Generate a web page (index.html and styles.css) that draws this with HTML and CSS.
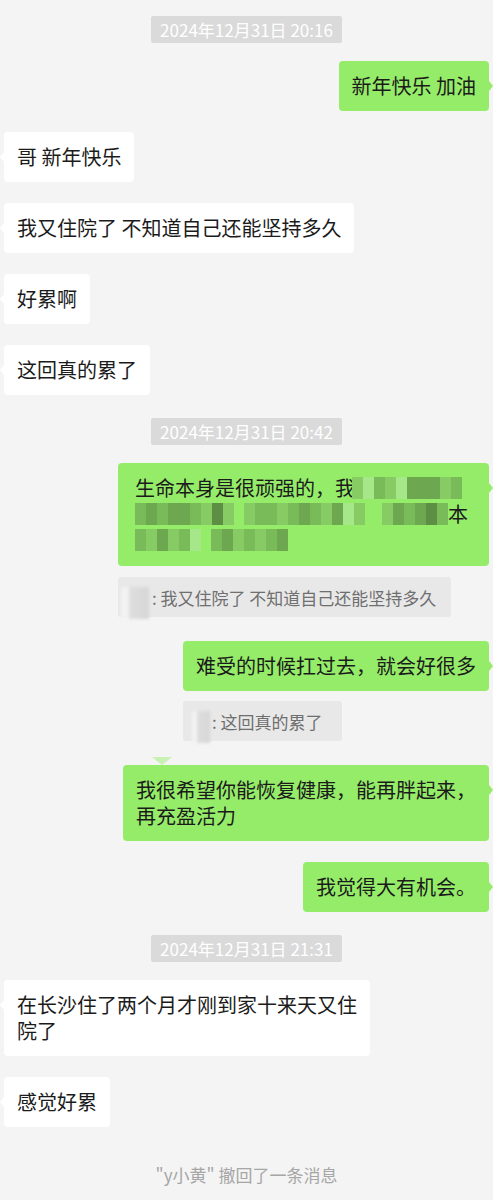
FILE: index.html
```html
<!DOCTYPE html>
<html lang="zh-CN">
<head>
    <meta charset="UTF-8">
    <meta name="viewport" content="width=device-width, initial-scale=1.0">
    <title>聊天记录</title>
    <link rel="stylesheet" href="styles.css">
</head>
<body>

    <div class="chat">

        <div class="time first">2024年12月31日 20:16</div>

        <div class="row me"><div class="bubble green">新年快乐 加油</div></div>
        <div class="row"><div class="bubble white">哥 新年快乐</div></div>
        <div class="row"><div class="bubble white">我又住院了 不知道自己还能坚持多久</div></div>
        <div class="row"><div class="bubble white">好累啊</div></div>
        <div class="row"><div class="bubble white">这回真的累了</div></div>

        <div class="time">2024年12月31日 20:42</div>

        <!-- reply with quoted message -->
        <div class="row me">
            <div class="group">
                <div class="bubble green wide">
                    <div class="line">生命本身是很顽强的，我<span class="mosaic m-a"><i class="c2"></i><i class="c1"></i><i class="c3"></i><i class="c2"></i><i class="c1"></i><i class="c4"></i><i class="c4"></i><i class="c4"></i><i class="c2"></i><i class="c3"></i></span></div>
                    <div class="line"><span class="mosaic m-b"><i class="c3"></i><i class="c4"></i><i class="c3"></i><i class="c4"></i><i class="c4"></i><i class="c3"></i><i class="c2"></i><i class="c5"></i><i class="c2"></i></span><span class="mosaic m-c"><i class="c2"></i><i class="c3"></i><i class="c3"></i><i class="c2"></i><i class="c3"></i><i class="c4"></i><i class="c3"></i><i class="c2"></i><i class="c4"></i><i class="c1"></i><i class="c2"></i></span><span class="mosaic m-d"><i class="c2"></i><i class="c4"></i><i class="c3"></i><i class="c4"></i><i class="c5"></i><i class="c3"></i></span>本</div>
                    <div class="line"><span class="mosaic m-e"><i class="c3"></i><i class="c2"></i><i class="c4"></i><i class="c2"></i><i class="c3"></i><i class="c1"></i></span><span class="mosaic m-f"><i class="c3"></i><i class="c4"></i><i class="c2"></i><i class="c3"></i><i class="c2"></i><i class="c3"></i><i class="c4"></i></span></div>
                </div>
                <div class="quote"><span class="blob"></span>: 我又住院了 不知道自己还能坚持多久</div>
            </div>
        </div>

        <div class="row me after-quote">
            <div class="group">
                <div class="bubble green">难受的时候扛过去，就会好很多</div>
                <div class="quote short"><span class="blob"></span>: 这回真的累了</div>
            </div>
        </div>

        <div class="row me after-quote"><div class="bubble green notch">我很希望你能恢复健康，能再胖起来，再充盈活力</div></div>
        <div class="row me"><div class="bubble green">我觉得大有机会。</div></div>

        <div class="time">2024年12月31日 21:31</div>

        <div class="row"><div class="bubble white">在长沙住了两个月才刚到家十来天又住院了</div></div>
        <div class="row"><div class="bubble white">感觉好累</div></div>

        <div class="notice">"y小黄" 撤回了一条消息</div>

    </div>

</body>
</html>
```

FILE: styles.css
```css
body {
    margin: 0;
    padding: 0;
    background-color: #f4f4f4;
    font-family: "Noto Sans CJK SC", "Liberation Sans", sans-serif;
    color: #1b1b1b;
}

/* Chat column */
.chat {
    display: flex;
    flex-direction: column;
    padding: 0 4px 20px;
}

/* Time divider */
.time {
    align-self: center;
    margin: 23px 0 18px;
    padding: 0 9px;
    height: 27px;
    line-height: 27px;
    font-size: 17px;
    color: #ffffff;
    background-color: #dadada;
    border-radius: 2px;
}

.time.first {
    margin-top: 16px;
}

/* Message rows */
.row {
    display: flex;
    justify-content: flex-start;
}

.row + .row {
    margin-top: 21px;
}

.row.me {
    justify-content: flex-end;
}

.row.after-quote {
    margin-top: 24px;
}

.group {
    display: flex;
    flex-direction: column;
    align-items: flex-start;
}

/* Bubbles */
.bubble {
    position: relative;
    box-sizing: border-box;
    max-width: 366px;
    padding: 12px 13px;
    font-size: 20px;
    line-height: 26px;
    border-radius: 4px;
}

.bubble.white {
    background-color: #ffffff;
}

.bubble.green {
    background-color: #95ec69;
}

.bubble.white::before {
    content: "";
    position: absolute;
    left: -4px;
    top: 20px;
    border-top: 5px solid transparent;
    border-bottom: 5px solid transparent;
    border-right: 4px solid #ffffff;
}

.bubble.green::after {
    content: "";
    position: absolute;
    right: -4px;
    top: 20px;
    border-top: 5px solid transparent;
    border-bottom: 5px solid transparent;
    border-left: 4px solid #95ec69;
}

/* little light tail sitting on top of a bubble */
.bubble.notch::before {
    content: "";
    position: absolute;
    left: 29px;
    top: -8px;
    border-left: 10px solid transparent;
    border-right: 10px solid transparent;
    border-top: 8px solid #c8f1b3;
}

.bubble.wide {
    width: 371px;
    max-width: none;
    padding: 12px 14px 13px 17px;
}

/* Pixelated (hidden) text */
.line {
    display: flex;
    align-items: center;
    height: 26px;
    white-space: nowrap;
}

.mosaic {
    display: inline-flex;
    height: 22px;
    overflow: hidden;
    filter: blur(0.6px);
}

.mosaic i {
    display: block;
    width: 11px;
    height: 22px;
}

.mosaic .c1 { background-color: #a6e889; }
.mosaic .c2 { background-color: #86cb64; }
.mosaic .c3 { background-color: #79ba59; }
.mosaic .c4 { background-color: #6da74f; }
.mosaic .c5 { background-color: #5c8f43; }

.m-a { margin-left: -3px; }
.m-b { margin-left: 0; }
.m-c { margin-left: 10px; }
.m-d { margin-left: 17px; }
.m-e { margin-left: 0; }
.m-f { margin-left: 10px; }

/* Quoted message */
.quote {
    display: flex;
    align-items: center;
    box-sizing: border-box;
    width: 333px;
    height: 40px;
    margin-top: 11px;
    padding-left: 3px;
    font-size: 17px;
    color: #6f6f6f;
    background-color: #e8e8e8;
    border-radius: 3px;
    white-space: nowrap;
}

.quote.short {
    width: 159px;
    margin-top: 10px;
    padding-left: 9px;
}

.blob {
    display: block;
    width: 28px;
    height: 32px;
    margin: 12px 3px 0 0;
    background: linear-gradient(90deg, #f2f2f2 0, #f2f2f2 30%, #dedede 30%, #d6d6d6 100%);
    filter: blur(1.5px);
}

.quote.short .blob {
    width: 18px;
    margin-right: 2px;
}

/* Recall notice */
.notice {
    align-self: center;
    margin-top: 35px;
    font-size: 17px;
    color: #a6a6a6;
}
```
